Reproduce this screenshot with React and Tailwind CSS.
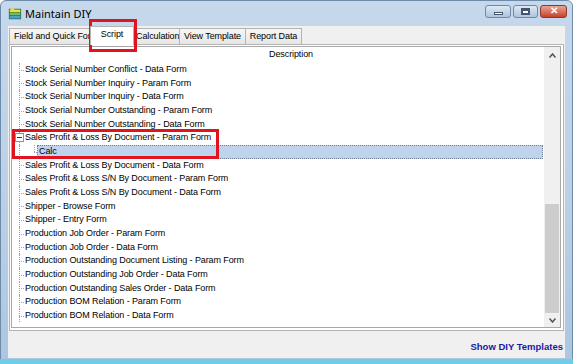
import React from "react";

const rows = [
  "Stock Serial Number Conflict - Data Form",
  "Stock Serial Number Inquiry - Param Form",
  "Stock Serial Number Inquiry - Data Form",
  "Stock Serial Number Outstanding - Param Form",
  "Stock Serial Number Outstanding - Data Form",
  "Sales Profit & Loss By Document - Param Form",
  "CALC",
  "Sales Profit & Loss By Document - Data Form",
  "Sales Profit & Loss S/N By Document - Param Form",
  "Sales Profit & Loss S/N By Document - Data Form",
  "Shipper - Browse Form",
  "Shipper - Entry Form",
  "Production Job Order - Param Form",
  "Production Job Order - Data Form",
  "Production Outstanding Document Listing - Param Form",
  "Production Outstanding Job Order - Data Form",
  "Production Outstanding Sales Order - Data Form",
  "Production BOM Relation - Param Form",
  "Production BOM Relation - Data Form",
];

function Row({ text, idx }) {
  if (text === "CALC") {
    return (
      <div className="flex h-[13.67px] items-center">
        <div className="w-[15px] h-full border-l border-dotted border-[#a0a0a0] ml-[7px] shrink-0" />
        <div className="w-[3px] h-full relative shrink-0">
          <div className="absolute left-0 top-0 h-1/2 border-l border-dotted border-[#a0a0a0]" />
          <div className="absolute left-0 top-1/2 w-[3px] border-t border-dotted border-[#a0a0a0]" />
        </div>
        <div className="flex-1 h-[14px] bg-[#c0d3ec] border border-dotted border-[#6f7f99] flex items-center pl-[1px] mr-[1px]">
          Calc
        </div>
      </div>
    );
  }
  const isParent = idx === 5;
  return (
    <div className="flex h-[13.67px] items-center">
      <div className="w-[5px] h-full relative shrink-0 ml-[7px]">
        <div className="absolute left-0 top-0 h-full border-l border-dotted border-[#a0a0a0]" />
        <div className="absolute left-0 top-1/2 w-[5px] border-t border-dotted border-[#a0a0a0]" />
        {isParent && (
          <div className="absolute left-[-4px] top-[2px] w-[9px] h-[9px] border border-[#919191] bg-white flex items-center justify-center">
            <div className="w-[5px] h-px bg-[#333]" />
          </div>
        )}
      </div>
      <span className="whitespace-nowrap ml-[1px]">{text}</span>
    </div>
  );
}

const tabBase =
  "h-[16px] border border-[#b4b4b4] border-b-0 bg-gradient-to-b from-[#f6f6f6] to-[#e6e6e6] flex items-center whitespace-nowrap overflow-hidden";

export default function App() {
  return (
    <div
      className="w-[573px] h-[364px] relative overflow-hidden text-[9px] text-black tracking-[-0.1px]"
      style={{ fontFamily: '"Liberation Sans", Arial, sans-serif' }}
    >
      {/* window frame */}
      <div className="absolute inset-0 bg-gradient-to-b from-[#c6d8eb] via-[#bcd1e7] to-[#acc6e1] border border-[#6d8aa8] rounded-t-[6px]" />
      <div className="relative flex flex-col h-full">
        {/* title bar */}
        <div className="h-[26px] flex items-center pl-[8px] shrink-0">
          <svg width="14" height="14" viewBox="0 0 16 16" className="mr-[3px] mt-[2px]">
            <rect x="1" y="2" width="14" height="12" fill="#2f7a3a" />
            <rect x="2" y="3" width="12" height="3" fill="#f0e040" />
            <rect x="2" y="7" width="12" height="2" fill="#7cc37a" />
            <rect x="2" y="10" width="12" height="3" fill="#4aa0d8" />
            <rect x="3" y="1" width="4" height="3" fill="#e8d36a" />
          </svg>
          <span
            className="text-[11px] mt-[3px] text-black tracking-normal"
            style={{ fontFamily: '"Noto Sans", "Liberation Sans", sans-serif' }}
          >
            Maintain DIY
          </span>
          <div className="ml-auto flex gap-[2px] mr-[6px] mb-[4px]">
            <div className="w-[26px] h-[13px] rounded-[3px] border border-[#6e88a8] bg-gradient-to-b from-[#dde8f4] to-[#aec5de] flex items-center justify-center">
              <div className="w-[9px] h-[3px] bg-white border border-[#44546a] mt-[4px]" />
            </div>
            <div className="w-[25px] h-[13px] rounded-[3px] border border-[#6e88a8] bg-gradient-to-b from-[#dde8f4] to-[#aec5de] flex items-center justify-center">
              <div className="w-[9px] h-[7px] bg-white border-2 border-[#44546a] border-t-[3px]" />
            </div>
            <div className="w-[27px] h-[13px] rounded-[3px] border border-[#8a3a2e] bg-gradient-to-b from-[#e8a392] to-[#c4402a] flex items-center justify-center">
              <span className="text-white text-[10px] font-bold leading-none">✕</span>
            </div>
          </div>
        </div>
        {/* client */}
        <div className="flex-1 mx-[8px] mb-[6px] bg-[#f0f0f0] flex flex-col relative">
          {/* tabs */}
          <div className="flex items-end h-[18px] shrink-0 pl-[1px]">
            <div className={`${tabBase} w-[81px] pl-[4px]`}>Field and Quick Form</div>
            <div className="h-[19px] w-[44px] border border-[#b4b4b4] border-b-0 bg-white flex items-center justify-center -mb-px z-10 pb-[2px]">
              Script
            </div>
            <div className={`${tabBase} w-[46px] border-l-0 pl-[2px]`}>Calculation</div>
            <div className={`${tabBase} w-[66px] border-l-0 justify-center`}>View Template</div>
            <div className={`${tabBase} w-[56px] border-l-0 justify-center`}>Report Data</div>
          </div>
          {/* panel */}
          <div className="h-[287px] bg-white border border-[#b4b4b4] ml-[1px] mr-[1px] flex shrink-0">
            <div className="flex-1 flex border border-[#a8a8a8] ml-px mt-px mb-[2px] mr-[2px]">
              <div className="flex-1 flex flex-col">
                <div className="h-[14px] flex items-center justify-center shrink-0 mt-[1px]">
                  <span className="ml-[26px]">Description</span>
                </div>
                <div className="flex flex-col mt-[1px]">
                  {rows.map((r, i) => (
                    <Row key={i} text={r} idx={i} />
                  ))}
                </div>
              </div>
              {/* scrollbar */}
              <div className="w-[16px] bg-[#f0f0f0] flex flex-col">
                <div className="h-[16px] flex items-center justify-center">
                  <svg width="7" height="5" viewBox="0 0 7 5">
                    <path d="M0.5 4.5 L3.5 1 L6.5 4.5" fill="none" stroke="#505050" strokeWidth="1.5" />
                  </svg>
                </div>
                <div className="h-[141px]" />
                <div className="flex-1 bg-[#cdcdcd] mx-[1px]" />
                <div className="h-[14px] flex items-center justify-center">
                  <svg width="7" height="5" viewBox="0 0 7 5">
                    <path d="M0.5 0.5 L3.5 4 L6.5 0.5" fill="none" stroke="#505050" strokeWidth="1.5" />
                  </svg>
                </div>
              </div>
            </div>
          </div>
          {/* bottom */}
          <div className="flex-1 flex items-center justify-end pr-[2px]">
            <span className="font-bold text-[#1a1aa6] text-[9.5px] tracking-normal mt-[5px]">
              Show DIY Templates
            </span>
          </div>
        </div>
        <div className="absolute left-0 right-0 bottom-0 h-[5px] bg-[#6fcde6]" />
      </div>
      {/* red annotation boxes */}
      <div className="absolute left-[89px] top-[19px] w-[48px] h-[33px] border-[3px] border-[#e0141e]" />
      <div className="absolute left-[12px] top-[129px] w-[207px] h-[30px] border-[3px] border-[#e0141e]" />
    </div>
  );
}
